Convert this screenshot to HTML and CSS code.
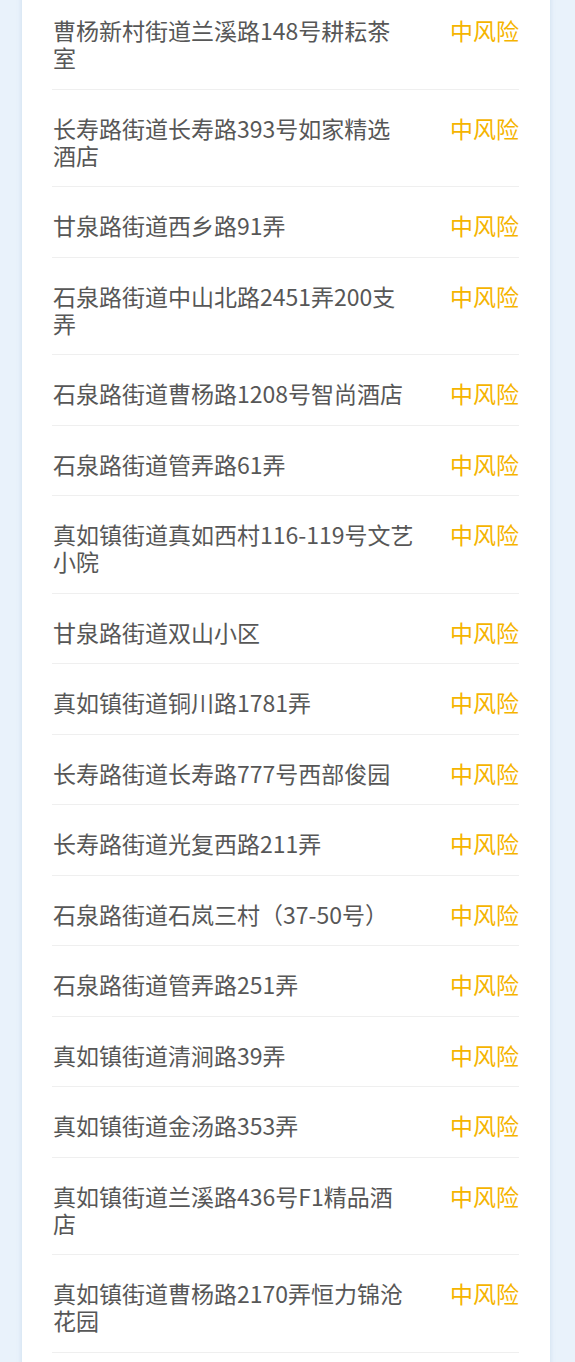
FILE: index.html
```html
<!DOCTYPE html>
<html lang="zh-CN">
<head>
    <meta charset="UTF-8">
    <meta name="viewport" content="width=device-width, initial-scale=1.0">
    <title>中风险地区</title>
    <link rel="stylesheet" href="styles.css">
</head>
<body>

    <div class="card">
        <ul class="area-list">
            <li class="area"><span class="name">曹杨新村街道兰溪路148号耕耘茶<br>室</span><span class="level">中风险</span></li>
            <li class="area"><span class="name">长寿路街道长寿路393号如家精选<br>酒店</span><span class="level">中风险</span></li>
            <li class="area"><span class="name">甘泉路街道西乡路91弄</span><span class="level">中风险</span></li>
            <li class="area"><span class="name">石泉路街道中山北路2451弄200支<br>弄</span><span class="level">中风险</span></li>
            <li class="area"><span class="name">石泉路街道曹杨路1208号智尚酒店</span><span class="level">中风险</span></li>
            <li class="area"><span class="name">石泉路街道管弄路61弄</span><span class="level">中风险</span></li>
            <li class="area"><span class="name">真如镇街道真如西村116-119号文艺<br>小院</span><span class="level">中风险</span></li>
            <li class="area"><span class="name">甘泉路街道双山小区</span><span class="level">中风险</span></li>
            <li class="area"><span class="name">真如镇街道铜川路1781弄</span><span class="level">中风险</span></li>
            <li class="area"><span class="name">长寿路街道长寿路777号西部俊园</span><span class="level">中风险</span></li>
            <li class="area"><span class="name">长寿路街道光复西路211弄</span><span class="level">中风险</span></li>
            <li class="area"><span class="name">石泉路街道石岚三村（37-50号）</span><span class="level">中风险</span></li>
            <li class="area"><span class="name">石泉路街道管弄路251弄</span><span class="level">中风险</span></li>
            <li class="area"><span class="name">真如镇街道清涧路39弄</span><span class="level">中风险</span></li>
            <li class="area"><span class="name">真如镇街道金汤路353弄</span><span class="level">中风险</span></li>
            <li class="area"><span class="name">真如镇街道兰溪路436号F1精品酒<br>店</span><span class="level">中风险</span></li>
            <li class="area"><span class="name">真如镇街道曹杨路2170弄恒力锦沧<br>花园</span><span class="level">中风险</span></li>
        </ul>
    </div>

</body>
</html>
```

FILE: styles.css
```css
body {
    margin: 0;
    background-color: #e9f2fb;
    font-family: "Noto Sans CJK SC", "Noto Sans", sans-serif;
    overflow: hidden;
}
.card {
    background-color: #ffffff;
    margin: -8px 25px 0 22px;
    padding: 0 31px 40px 30px;
    box-shadow: 0 0 5px rgba(120, 160, 200, 0.25);
}
.area-list {
    list-style: none;
    margin: 0;
    padding: 0;
}
.area {
    display: flex;
    align-items: flex-start;
    justify-content: space-between;
    padding: 25px 0 17.5px 0;
    border-bottom: 1px solid #efefef;
    font-size: 23px;
    line-height: 27px;
}
.name {
    flex: 1;
    max-width: 366px;
    color: #575757;
    padding-left: 1px;
}
.level {
    color: #f5b400;
    white-space: nowrap;
}
```
